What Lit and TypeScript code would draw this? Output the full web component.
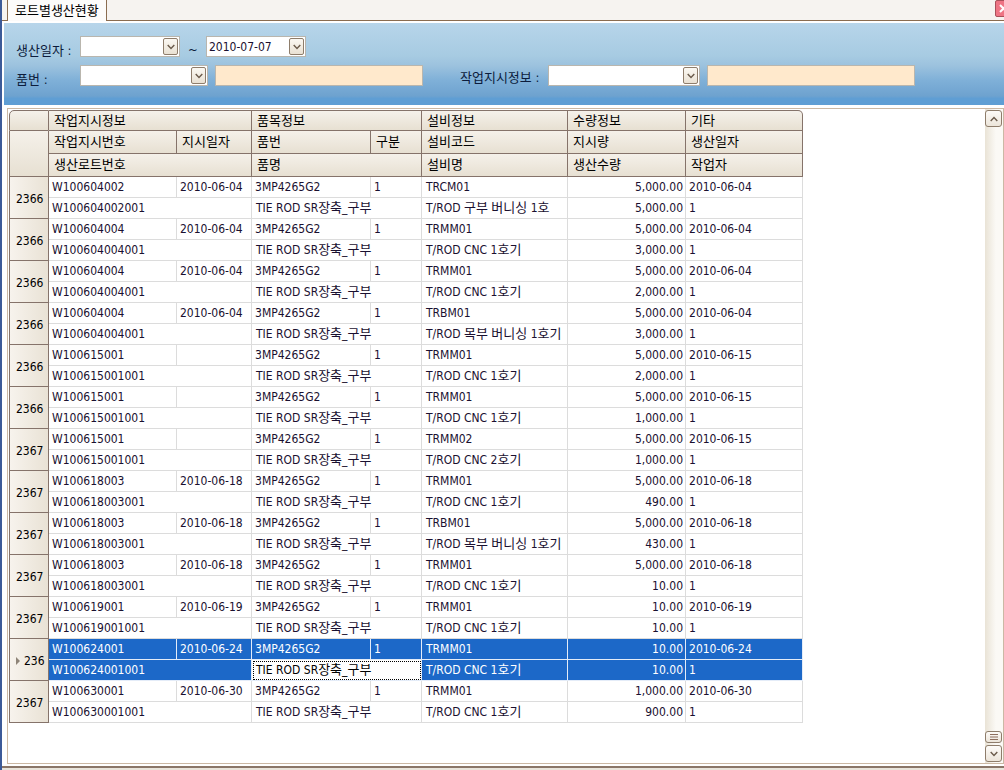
import { LitElement, html, css, svg } from "lit";
import { customElement, property } from "lit/decorators.js";
import { classMap } from "lit/directives/class-map.js";

interface Lot {
  no: string;
  order: string;
  lot: string;
  orderDate: string;
  machine: string;
  machineName: string;
  orderQty: string;
  lotQty: string;
  date: string;
}

const lot = (
  no: string, order: string, orderDate: string, machine: string, machineName: string,
  orderQty: string, lotQty: string, date: string,
): Lot => ({ no, order, lot: order + "001", orderDate, machine, machineName, orderQty, lotQty, date });

const LOTS: Lot[] = [
  lot("2366", "W100604002", "2010-06-04", "TRCM01", "T/ROD 구부 버니싱 1호", "5,000.00", "5,000.00", "2010-06-04"),
  lot("2366", "W100604004", "2010-06-04", "TRMM01", "T/ROD CNC 1호기", "5,000.00", "3,000.00", "2010-06-04"),
  lot("2366", "W100604004", "2010-06-04", "TRMM01", "T/ROD CNC 1호기", "5,000.00", "2,000.00", "2010-06-04"),
  lot("2366", "W100604004", "2010-06-04", "TRBM01", "T/ROD 목부 버니싱 1호기", "5,000.00", "3,000.00", "2010-06-04"),
  lot("2366", "W100615001", "", "TRMM01", "T/ROD CNC 1호기", "5,000.00", "2,000.00", "2010-06-15"),
  lot("2366", "W100615001", "", "TRMM01", "T/ROD CNC 1호기", "5,000.00", "1,000.00", "2010-06-15"),
  lot("2367", "W100615001", "", "TRMM02", "T/ROD CNC 2호기", "5,000.00", "1,000.00", "2010-06-15"),
  lot("2367", "W100618003", "2010-06-18", "TRMM01", "T/ROD CNC 1호기", "5,000.00", "490.00", "2010-06-18"),
  lot("2367", "W100618003", "2010-06-18", "TRBM01", "T/ROD 목부 버니싱 1호기", "5,000.00", "430.00", "2010-06-18"),
  lot("2367", "W100618003", "2010-06-18", "TRMM01", "T/ROD CNC 1호기", "5,000.00", "10.00", "2010-06-18"),
  lot("2367", "W100619001", "2010-06-19", "TRMM01", "T/ROD CNC 1호기", "10.00", "10.00", "2010-06-19"),
  lot("236", "W100624001", "2010-06-24", "TRMM01", "T/ROD CNC 1호기", "10.00", "10.00", "2010-06-24"),
  lot("2367", "W100630001", "2010-06-30", "TRMM01", "T/ROD CNC 1호기", "1,000.00", "900.00", "2010-06-30"),
];

const CURRENT = 11;

const chevron = (up = false) => svg`<svg width="8" height="6" viewBox="0 0 8 6" fill="none" stroke="#6b5b4b" stroke-width="1.4">
  <path d=${up ? "M.7 5 4 1.5 7.3 5" : "M.7 1 4 4.5 7.3 1"} /></svg>`;

/* Hangul glyphs are set one step larger than the Latin text beside them. */
const mixed = (text: string) =>
  text.split(/([가-힣]+)/).map((part, i) => (i % 2 ? html`<span class="ko">${part}</span>` : part));

@customElement("date-box")
class DateBox extends LitElement {
  @property() label = "";
  @property() value = "";
  static styles = css`
    :host { display: flex; box-sizing: border-box; width: 100px; height: 21px; background: #fff; border: 1px solid #b9b6ae; padding: 1px; }
    input { flex: 1; min-width: 0; border: 0; outline: 0; padding: 0 1px; background: none; color: #1a1030; font: 12px "DejaVu Sans Condensed", "DejaVu Sans", sans-serif; }
    button { display: grid; place-items: center; width: 15px; padding: 0; border: 1px solid #8e7d6b; border-radius: 2px; background: linear-gradient(#fbf8f2, #e9e1d3); }
  `;
  render() {
    return html`<input type="text" aria-label=${this.label} .value=${this.value} /><button aria-label="달력 열기">${chevron()}</button>`;
  }
}

@customElement("search-panel")
class SearchPanel extends LitElement {
  static styles = css`
    :host { display: grid; gap: 8px; box-sizing: border-box; height: 82px; padding: 13px 12px 0; background: linear-gradient(#b7d5ea, #a7cbe2 40%, #9cc2de 52%, #7fb0d8 70%, #6ea2cf 89%, #5f9ed4 92%, #5f9ed4); align-content: start; }
    .line { display: flex; align-items: center; height: 21px; font: 13px "DejaVu Sans Condensed", "Noto Sans CJK KR", sans-serif; color: #0c1c3c; }
    label, .label { width: 64px; padding-top: 6px; white-space: pre; }
    .to { width: 26px; padding-top: 6px; text-align: center; }
    .pick { display: grid; width: 128px; height: 21px; margin-right: 7px; }
    .pick.wide { width: 152px; }
    .pick select { grid-area: 1 / 1; appearance: none; width: 100%; height: 21px; margin: 0; border: 1px solid #b9b6ae; border-radius: 0; background: #fff; font: 12px "DejaVu Sans Condensed", sans-serif; }
    .pick i { grid-area: 1 / 1; place-self: center end; display: grid; place-items: center; box-sizing: border-box; width: 15px; height: 17px; margin-right: 2px; border: 1px solid #8e7d6b; border-radius: 2px; background: linear-gradient(#fbf8f2, #e9e1d3); pointer-events: none; }
    .name { box-sizing: border-box; width: 208px; height: 21px; border: 1px solid #b9b6ae; background: #ffe9cc; padding: 0 3px; }
    .order { width: 88px; margin-left: 37px; padding-top: 2px; }
  `;
  render() {
    return html`
      <div class="line">
        <span class="label">생산일자 :</span><date-box label="생산일자 시작"></date-box>
        <span class="to">~</span><date-box label="생산일자 끝" value="2010-07-07"></date-box>
      </div>
      <div class="line">
        <label for="item">품번 :</label>
        <span class="pick"><select id="item"><option></option></select><i>${chevron()}</i></span>
        <input class="name" readonly aria-label="품명" />
        <label class="order" for="order">작업지시정보 :</label>
        <span class="pick wide"><select id="order"><option></option></select><i>${chevron()}</i></span>
        <input class="name" readonly aria-label="작업지시명" />
      </div>`;
  }
}

@customElement("lot-grid")
class LotGrid extends LitElement {
  static styles = css`
    :host { display: block; }
    table { border-collapse: separate; border-spacing: 0; table-layout: fixed; width: 794px; font: 12px "DejaVu Sans Condensed", "DejaVu Sans", "Noto Sans CJK KR", sans-serif; color: #1a1030; }
    th, td { box-sizing: border-box; height: 21px; padding: 0 2px 0 3px; overflow: hidden; white-space: nowrap; text-align: left; font-weight: 400; line-height: 20px; border: 0 solid #dcdcdc; border-width: 0 1px 1px 0; vertical-align: top; }
    thead th { height: 23px; padding: 0 2px 2px 5px; font: 13px/18px "Noto Sans CJK KR", sans-serif; color: #000; vertical-align: middle; border-color: #85736a; background: linear-gradient(#f5f1ea, #e7e0d2); }
    thead tr:first-child th { height: 21px; line-height: 17px; border-top-width: 1px; }
    .c0 { width: 40px; } .c1 { width: 128px; } .c2 { width: 75px; } .c3 { width: 119px; }
    .c4 { width: 51px; } .c5 { width: 146px; } .c6 { width: 118px; } .c7 { width: 117px; }
    thead .first { border-left-width: 1px; border-top-left-radius: 5px; }
    thead .side { border-left-width: 1px; }
    thead .last { border-top-right-radius: 5px; }
    tbody th { padding: 2px 4px 0 6px; border-color: #85736a; border-left-width: 1px; background: linear-gradient(90deg, #f7f3ed, #e9e2d5); vertical-align: middle; color: #000; }
    .no { display: flex; align-items: center; gap: 4px; }
    .no svg { flex: none; }
    .num { text-align: right; }
    .name { padding-left: 4px; }
    .machine { padding-left: 4px; padding-right: 0; }
    .on td { background: #1c68c8; color: #fff; border-color: #e4ecf8; }
    .on td.focus { background: #fff; color: #000; outline: 1px dotted #000; outline-offset: -2px; }
    .ko { font: 13px/16px "Noto Sans CJK KR", sans-serif; }
  `;
  render() {
    return html`<table>
      <colgroup>${[0, 1, 2, 3, 4, 5, 6, 7].map((n) => html`<col class="c${n}" />`)}</colgroup>
      <thead>
        <tr><th class="first"></th><th colspan="2">작업지시정보</th><th colspan="2">품목정보</th><th>설비정보</th><th>수량정보</th><th class="last">기타</th></tr>
        <tr><th class="side" rowspan="2"></th><th>작업지시번호</th><th>지시일자</th><th>품번</th><th>구분</th><th>설비코드</th><th>지시량</th><th>생산일자</th></tr>
        <tr><th colspan="2">생산로트번호</th><th colspan="2">품명</th><th>설비명</th><th>생산수량</th><th>작업자</th></tr>
      </thead>
      <tbody>${LOTS.map((r, i) => {
        const on = classMap({ on: i === CURRENT });
        return html`
        <tr class=${on}>
          <th rowspan="2" scope="rowgroup"><div class="no">${i === CURRENT ? svg`<svg width="4" height="8" viewBox="0 0 4 8"><path d="M0 0 4 4 0 8Z" fill="#8e8478"/></svg>` : ""}<span>${r.no}</span></div></th>
          <td>${r.order}</td><td>${r.orderDate}</td><td>3MP4265G2</td><td>1</td>
          <td class="machine">${r.machine}</td><td class="num">${r.orderQty}</td><td>${r.date}</td>
        </tr>
        <tr class=${on}>
          <td colspan="2">${r.lot}</td>
          <td colspan="2" class=${classMap({ name: true, focus: i === CURRENT })}>${mixed("TIE ROD SR장축_구부")}</td>
          <td class="machine">${mixed(r.machineName)}</td><td class="num">${r.lotQty}</td><td>1</td>
        </tr>`;
      })}</tbody>
    </table>`;
  }
}

@customElement("app-root")
class AppRoot extends LitElement {
  static styles = css`
    :host { display: flex; flex-direction: column; box-sizing: border-box; height: 100vh; min-height: 400px; overflow: hidden; border-left: 2px solid #3c5a98; background: #f6f3f0; }
    .tabs { display: flex; justify-content: space-between; align-items: flex-start; height: 21px; padding-left: 5px; box-shadow: inset 0 -1px #8a6c50; overflow: hidden; }
    .tab { box-sizing: border-box; width: 100px; height: 21px; padding: 0 0 2px 7px; border: solid #8a6c50; border-width: 0 1px; background: #fcfbfa; color: #000; text-align: left; white-space: nowrap; font: 13px/18px "Noto Sans CJK KR", sans-serif; }
    .close { display: grid; place-items: center; flex: none; width: 17px; height: 17px; padding: 0; margin-right: -8px; border: 1px solid #a8505a; border-radius: 2px; background: #ee7484; }
    .body { flex: 1; min-height: 0; display: flex; flex-direction: column; padding: 2px 0 2px 2px; background: #fff; border-bottom: 2px solid #8a7668; }
    .pane { flex: 1; min-height: 0; display: flex; margin: 3px 0 0 3px; border: 1px solid #cbb8a4; border-right: 0; }
    lot-grid { flex: 1; min-width: 0; overflow: hidden; padding: 1px 0 0 1px; }
    .scroll { display: flex; flex-direction: column; gap: 2px; box-sizing: border-box; width: 19px; padding: 1px 1px 1px 0; background: linear-gradient(90deg, #e9e3d6, #fbf9f5 60%); border-right: 1px solid #cbb8a4; }
    .scroll button { display: grid; place-items: center; width: 17px; height: 17px; padding: 0; border: 1px solid #8e7d6b; border-radius: 3px; background: linear-gradient(#fdfbf8, #ece5da); }
    .scroll .thumb { height: 12px; margin-top: auto; }
    .foot { height: 2px; background: #e9e5dc; }
  `;
  render() {
    return html`
      <div class="tabs">
        <button class="tab">로트별생산현황</button>
        <button class="close" aria-label="닫기"><svg width="9" height="9" viewBox="0 0 9 9"><path d="M1 1 8 8M8 1 1 8" stroke="#fff" stroke-width="2"/></svg></button>
      </div>
      <div class="body">
        <search-panel></search-panel>
        <div class="pane">
          <lot-grid></lot-grid>
          <div class="scroll">
            <button aria-label="위로">${chevron(true)}</button>
            <button class="thumb" aria-label="스크롤 위치"><svg width="8" height="6" viewBox="0 0 8 6"><path d="M0 .5H8M0 3H8M0 5.5H8" stroke="#8e6f5e"/></svg></button>
            <button aria-label="아래로">${chevron()}</button>
          </div>
        </div>
      </div>
      <div class="foot"></div>`;
  }
}
